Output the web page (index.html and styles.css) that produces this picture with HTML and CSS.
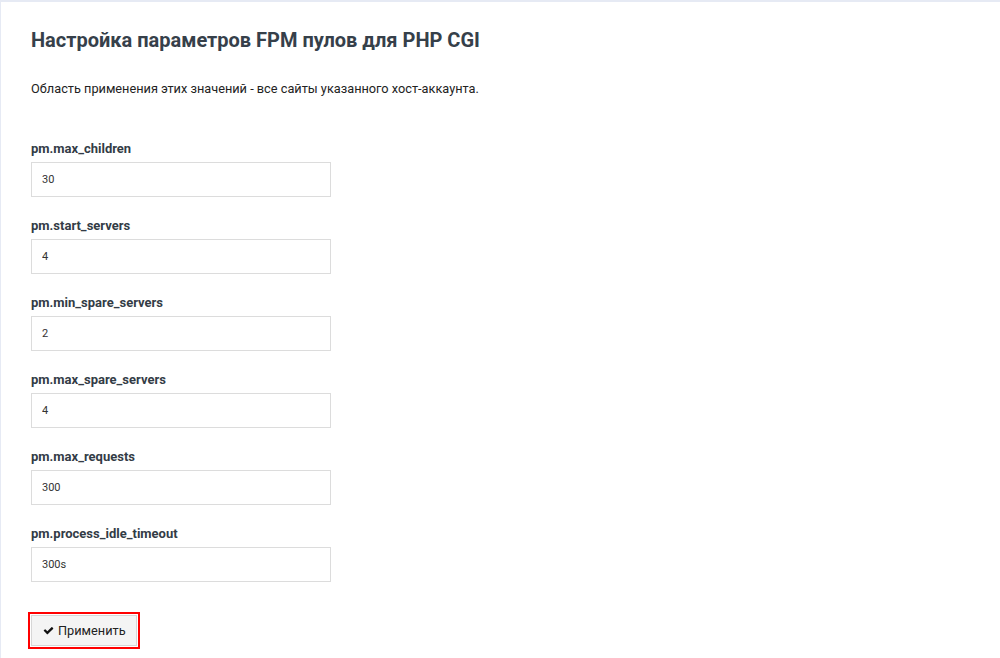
FILE: index.html
```html
<!DOCTYPE html>
<html lang="ru">
<head>
<meta charset="utf-8">
<title>FPM</title>
<link rel="stylesheet" href="styles.css">
</head>
<body>
<div class="page">
  <h1 class="title">Настройка параметров FPM пулов для PHP CGI</h1>
  <p class="desc">Область применения этих значений - все сайты указанного хост-аккаунта.</p>
  <form class="form">
    <div class="field">
      <label class="label">pm.max_children</label>
      <input class="input" type="text" value="30">
    </div>
    <div class="field">
      <label class="label">pm.start_servers</label>
      <input class="input" type="text" value="4">
    </div>
    <div class="field">
      <label class="label">pm.min_spare_servers</label>
      <input class="input" type="text" value="2">
    </div>
    <div class="field">
      <label class="label">pm.max_spare_servers</label>
      <input class="input" type="text" value="4">
    </div>
    <div class="field">
      <label class="label">pm.max_requests</label>
      <input class="input" type="text" value="300">
    </div>
    <div class="field">
      <label class="label">pm.process_idle_timeout</label>
      <input class="input" type="text" value="300s">
    </div>
    <button class="btn" type="button"><svg class="icon" viewBox="0 0 1792 1792"><path d="M1671 566q0 40-28 68l-724 724-136 136q-28 28-68 28t-68-28l-136-136-362-362q-28-28-28-68t28-68l136-136q28-28 68-28t68 28l294 295 656-657q28-28 68-28t68 28l136 136q28 28 28 68z"/></svg>Применить</button>
  </form>
</div>
</body>
</html>
```

FILE: styles.css
```css
html, body {
  margin: 0;
  padding: 0;
  background: #ffffff;
}
body {
  font-family: Roboto, "Liberation Sans", Arial, sans-serif;
  color: #222;
}
.page {
  box-sizing: border-box;
  min-height: 658px;
  border-top: 2px solid #e6eaf4;
  border-left: 1px solid #e6eaf4;
  padding: 26px 0 0 30px;
}
.title {
  margin: 0;
  font-size: 20px;
  line-height: 24px;
  font-weight: 700;
  color: #36404a;
}
.desc {
  margin: 28px 0 0 0;
  font-size: 12.75px;
  line-height: 18px;
  color: #222;
}
.form {
  margin-top: 42px;
  display: flex;
  flex-direction: column;
  align-items: flex-start;
}
.field {
  display: flex;
  flex-direction: column;
  margin-bottom: 20px;
}
.label {
  font-size: 13px;
  line-height: 18px;
  font-weight: 700;
  color: #333c46;
  margin-bottom: 4px;
}
.input {
  box-sizing: border-box;
  width: 300px;
  height: 35px;
  border: 1px solid #dcdcdc;
  padding: 0 10px;
  font-family: Roboto, "Liberation Sans", Arial, sans-serif;
  font-size: 11px;
  color: #333;
  background: #fff;
  outline: none;
}
.btn {
  margin-top: 13px;
  display: flex;
  align-items: center;
  gap: 4px;
  box-sizing: border-box;
  height: 31px;
  padding: 0 10px 0 11px;
  background: #f4f4f4;
  border: 1px solid #d6d6d6;
  font-family: Roboto, "Liberation Sans", Arial, sans-serif;
  font-size: 12.75px;
  color: #222;
  outline: 2px solid #ff0000;
  outline-offset: 1px;
  cursor: pointer;
}
.icon {
  width: 11px;
  height: 11px;
  fill: #111;
}
```
